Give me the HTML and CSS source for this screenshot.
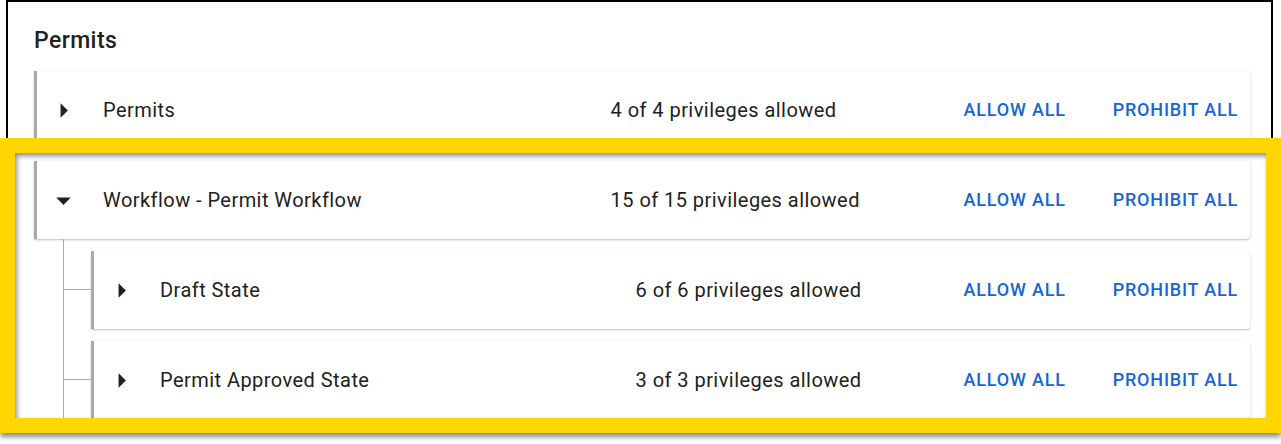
FILE: index.html
```html
<!DOCTYPE html>
<html lang="en">
<head>
<meta charset="utf-8">
<title>Permits</title>
<link rel="stylesheet" href="styles.css">
</head>
<body>
<div class="frame">
  <h2 class="heading">Permits</h2>
  <div class="tree">
    <div class="card">
      <div class="row">
        <span class="caret"><svg viewBox="0 0 24 24" width="35" height="35"><path d="M10 17l5-5-5-5v10z"/></svg></span>
        <span class="title">Permits</span>
        <span class="count">4 of 4 privileges allowed</span>
        <span class="actions"><button class="btn">ALLOW ALL</button><button class="btn">PROHIBIT ALL</button></span>
      </div>
    </div>
    <div class="node">
      <div class="card">
        <div class="row">
          <span class="caret"><svg viewBox="0 0 24 24" width="35" height="35"><path d="M7 10l5 5 5-5z"/></svg></span>
          <span class="title">Workflow - Permit Workflow</span>
          <span class="count">15 of 15 privileges allowed</span>
          <span class="actions"><button class="btn">ALLOW ALL</button><button class="btn">PROHIBIT ALL</button></span>
        </div>
      </div>
      <div class="children">
        <div class="child">
          <div class="card">
            <div class="row row-child">
              <span class="caret"><svg viewBox="0 0 24 24" width="35" height="35"><path d="M10 17l5-5-5-5v10z"/></svg></span>
              <span class="title">Draft State</span>
              <span class="count">6 of 6 privileges allowed</span>
              <span class="actions"><button class="btn">ALLOW ALL</button><button class="btn">PROHIBIT ALL</button></span>
            </div>
          </div>
        </div>
        <div class="child">
          <div class="card">
            <div class="row row-child">
              <span class="caret"><svg viewBox="0 0 24 24" width="35" height="35"><path d="M10 17l5-5-5-5v10z"/></svg></span>
              <span class="title">Permit Approved State</span>
              <span class="count">3 of 3 privileges allowed</span>
              <span class="actions"><button class="btn">ALLOW ALL</button><button class="btn">PROHIBIT ALL</button></span>
            </div>
          </div>
        </div>
      </div>
    </div>
  </div>
</div>
<div class="highlight"></div>
</body>
</html>
```
FILE: styles.css
```css
html, body {
  margin: 0;
  padding: 0;
  height: 444px;
  overflow: hidden;
  background: #fff;
}
body {
  font-family: Roboto, "Liberation Sans", Arial, sans-serif;
  color: #212121;
  position: relative;
}
.frame {
  box-sizing: border-box;
  height: 433px;
  overflow: hidden;
  margin: 0 8px 0 6px;
  border: 2px solid #000;
  border-bottom: none;
  padding: 25px 21px 0 26px;
}
.heading {
  margin: 0 0 16px;
  font-size: 23px;
  font-weight: 500;
  letter-spacing: 0.4px;
  line-height: 28px;
  color: #212121;
}
.tree {
  display: flex;
  flex-direction: column;
  gap: 12px;
}
.card {
  background: #fff;
  border-left: 3px solid #a9a9a9;
  border-radius: 0 4px 4px 0;
  box-shadow: 0 1px 3px rgba(0,0,0,0.18), 0 1px 1px rgba(0,0,0,0.10);
}
.row {
  height: 78px;
  display: flex;
  align-items: center;
  padding: 0 4px 0 9px;
}
.row-child {
  padding-left: 10px;
}
.caret {
  width: 35px;
  height: 35px;
  display: flex;
  align-items: center;
  justify-content: center;
  flex: none;
}
.caret svg {
  fill: #212121;
  display: block;
}
.title {
  flex: 1;
  margin-left: 22px;
  font-size: 20px;
  letter-spacing: 0.45px;
  white-space: nowrap;
}
.row-child .title {
  margin-left: 21px;
}
.count {
  width: 345px;
  flex: none;
  font-size: 20px;
  letter-spacing: 0.45px;
  white-space: nowrap;
}
.row-child .count {
  width: 320px;
}
.actions {
  display: flex;
  gap: 31px;
  flex: none;
}
.btn {
  font-family: Roboto, "Liberation Sans", Arial, sans-serif;
  font-size: 18px;
  font-weight: 500;
  letter-spacing: 0.8px;
  color: #1766d3;
  background: none;
  border: none;
  padding: 8px 8px;
  line-height: 20px;
  cursor: pointer;
}
.node {
  display: flex;
  flex-direction: column;
}
.children {
  margin-left: 29px;
  border-left: 1px solid #a9a9a9;
  padding: 12px 0 14px 27px;
  display: flex;
  flex-direction: column;
  gap: 12px;
}
.child {
  position: relative;
}
.child::before {
  content: "";
  position: absolute;
  left: -27px;
  top: 38px;
  width: 27px;
  height: 1px;
  background: #a9a9a9;
}
.highlight {
  position: absolute;
  left: 0;
  top: 138px;
  width: 1281px;
  height: 295px;
  box-sizing: border-box;
  border: 15px solid #ffd600;
  box-shadow: inset 2px 3px 5px rgba(0,0,0,0.45), 0 4px 5px rgba(0,0,0,0.45);
  pointer-events: none;
  z-index: 10;
}
```
